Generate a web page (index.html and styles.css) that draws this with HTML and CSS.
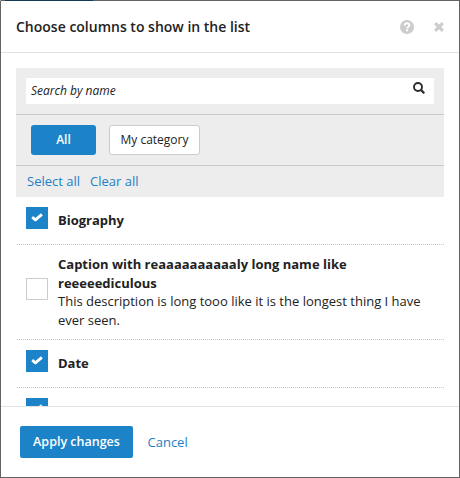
FILE: index.html
```html
<!DOCTYPE html>
<html lang="en">
<head>
<meta charset="utf-8">
<title>Choose columns</title>
<link rel="stylesheet" href="styles.css">
</head>
<body>
<div class="dialog">
  <header class="header">
    <h1 class="title">Choose columns to show in the list</h1>
    <svg class="help" viewBox="0 0 14 14"><circle cx="7" cy="7" r="7" fill="#ccc"/><path d="M4.7 5.5C4.8 3.9 5.7 3.2 7 3.2c1.4 0 2.4.8 2.4 2C9.400 6.700 7.200 6.800 7.200 8.500" fill="none" stroke="#fff" stroke-width="1.9"/><rect x="6.100" y="9.400" width="2" height="1.900" fill="#fff"/></svg>
    <svg class="close" viewBox="0 0 9 9"><path d="M1.100 1.100l6.800 6.800M7.900 1.100L1.100 7.900" stroke="#ccc" stroke-width="2.900"/></svg>
  </header>
  <main class="content">
    <section class="filters">
      <div class="search-row">
        <div class="search">
          <span class="placeholder">Search by name</span>
          <svg class="magnifier" viewBox="0 0 12 12"><circle cx="5" cy="5" r="4" fill="none" stroke="#2b2b2b" stroke-width="1.900"/><path d="M7.900 7.900l3.400 3.400" stroke="#2b2b2b" stroke-width="2.200"/></svg>
        </div>
      </div>
      <div class="categories">
        <button class="chip chip-active">All</button>
        <button class="chip chip-plain">My category</button>
      </div>
      <div class="links"><a class="link">Select all</a><a class="link">Clear all</a></div>
    </section>
    <ul class="list">
      <li class="item">
        <span class="box checked"><svg class="check" viewBox="0 0 12 9"><path d="M1.200 4.100l3.200 2.700L10.900 1.400" fill="none" stroke="#fff" stroke-width="2.900" stroke-linejoin="round"/></svg></span>
        <div class="text single"><b class="name">Biography</b></div>
      </li>
      <li class="item">
        <span class="box"></span>
        <div class="text"><b class="name">Caption with reaaaaaaaaaaly long name like reeeeediculous</b><span class="desc">This description is long tooo like it is the longest thing I have ever seen.</span></div>
      </li>
      <li class="item">
        <span class="box checked"><svg class="check" viewBox="0 0 12 9"><path d="M1.200 4.100l3.200 2.700L10.900 1.400" fill="none" stroke="#fff" stroke-width="2.900" stroke-linejoin="round"/></svg></span>
        <div class="text single"><b class="name">Date</b></div>
      </li>
      <li class="item">
        <span class="box checked"><svg class="check" viewBox="0 0 12 9"><path d="M1.200 4.100l3.200 2.700L10.900 1.400" fill="none" stroke="#fff" stroke-width="2.900" stroke-linejoin="round"/></svg></span>
      </li>
    </ul>
  </main>
  <footer class="footer">
    <button class="apply">Apply changes</button>
    <a class="link cancel">Cancel</a>
  </footer>
</div>
</body>
</html>
```
FILE: styles.css
```css
* { box-sizing: border-box; }
body {
  margin: 0;
  font: 13px/18.67px "Open Sans", sans-serif;
  color: #222;
}
svg { display: block; flex: none; }
button { font: inherit; }
.dialog {
  height: 478px;
  display: flex;
  flex-direction: column;
  border: 1px solid #636363;
  border-top-color: transparent;
  background: linear-gradient(90deg, #636363 0 5px, #123a58 5px 93px, #636363 93px) 0 0 / 100% 1px no-repeat border-box, #fff;
  overflow: hidden;
}
.header {
  flex: none;
  height: 52px;
  display: flex;
  align-items: center;
  padding: 0 15px;
  border-bottom: 1px solid #e2e2e2;
}
.title { flex: 1; margin: 0; padding-top: 2px; font-size: 14px; font-weight: 600; }
.help { width: 14px; height: 14px; margin-right: 20px; }
.close { width: 10px; height: 10px; }
.content {
  flex: none;
  height: 353px;
  padding: 15px 15px 0;
  overflow: hidden;
}
.filters { height: 129px; background: #ededed; }
.search-row { height: 47px; padding: 10px; border-bottom: 1px solid #c9c9c9; }
.search {
  height: 26px;
  display: flex;
  justify-content: space-between;
  padding: 4px 9px 0 5px;
  background: #fff;
}
.placeholder { font-size: 12px; font-style: italic; }
.magnifier { width: 12px; height: 12px; }
.categories {
  height: 51px;
  display: flex;
  gap: 13px;
  padding: 10px 15px;
  border-bottom: 1px solid #c9c9c9;
}
.chip { height: 30px; padding: 0; border-radius: 3px; font-size: 12px; }
.chip-active { width: 65px; border: 0; background: #1d83c8; color: #fff; font-weight: 600; }
.chip-plain { width: 91px; border: 1px solid #ccc; background: #fff; color: #222; }
.links { display: flex; gap: 10px; padding: 6px 11px; }
.link { color: #1d7fc6; }
.list { margin: 0; padding: 0; list-style: none; }
.item {
  min-height: 48px;
  display: flex;
  align-items: center;
  gap: 10px;
  padding: 10px 10px 9px;
  background: repeating-linear-gradient(90deg, #c4c4c4 0 1px, transparent 1px 2px) 1px 100% / 100% 1px no-repeat;
}
.box {
  flex: none;
  width: 22px;
  height: 22px;
  display: flex;
  justify-content: center;
  margin: -0.4px 0 7.4px;
  padding-top: 5px;
  border: 1px solid #ccc;
}
.checked { border-color: #1d83c8; background: #1d83c8; }
.check { width: 12px; height: 9px; }
.text { flex: 1; padding-bottom: 1.32px; }
.single { padding-bottom: 2.4px; }
.name, .desc { display: block; }
.footer {
  flex: 1;
  display: flex;
  align-items: center;
  gap: 15px;
  padding: 0 19px;
  border-top: 1px solid #e2e2e2;
}
.apply {
  width: 113px;
  height: 32px;
  padding: 0;
  border: 0;
  border-radius: 2px;
  background: #1d83c8;
  color: #fff;
  font-size: 12.500px;
  font-weight: 600;
}
.cancel { margin-left: -0.5px; }
```
